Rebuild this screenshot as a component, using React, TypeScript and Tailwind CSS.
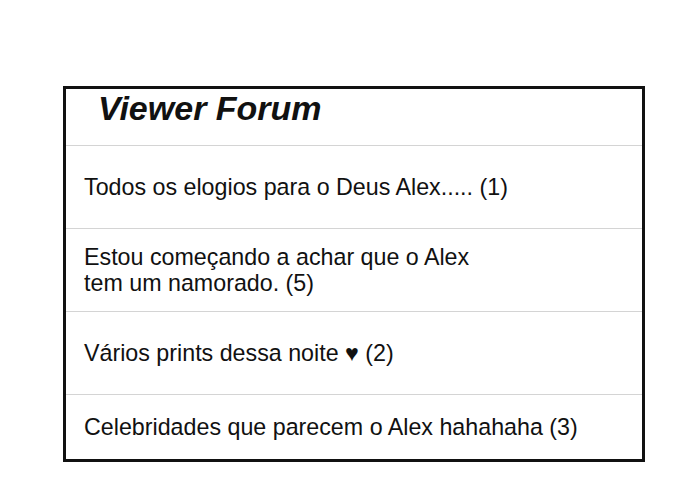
const topics = [
  { id: 1, lines: ['Todos os elogios para o Deus Alex..... (1)'] },
  { id: 2, lines: ['Estou começando a achar que o Alex', 'tem um namorado. (5)'] },
  { id: 3, lines: ['Vários prints dessa noite ♥ (2)'] },
];

export default function App() {
  return (
    <main
      className="min-h-[485px] w-[700px] bg-white pl-[63px] pt-[86px] text-[#111]"
      style={{ fontFamily: '"Liberation Sans", Arial, sans-serif' }}
    >
      <section className="flex w-[582px] flex-col border-[3px] border-[#111]">
        <header className="h-[56px] pl-[32px] pt-[2px]">
          <h1 className="text-[34px] font-bold italic leading-none">Viewer Forum</h1>
        </header>

        {topics.map((t) => (
          <div
            key={t.id}
            className="flex h-[83px] flex-col justify-center border-t border-[#d4d4d4] pl-[18px] text-[23.25px] leading-[26px]"
          >
            {t.lines.map((line) => (
              <p key={line}>{line}</p>
            ))}
          </div>
        ))}

        <div className="flex h-[65px] items-center border-t border-[#d4d4d4] pl-[18px] text-[23.25px] leading-[26px]">
          <p>Celebridades que parecem o Alex hahahaha (3)</p>
        </div>
      </section>
    </main>
  );
}
